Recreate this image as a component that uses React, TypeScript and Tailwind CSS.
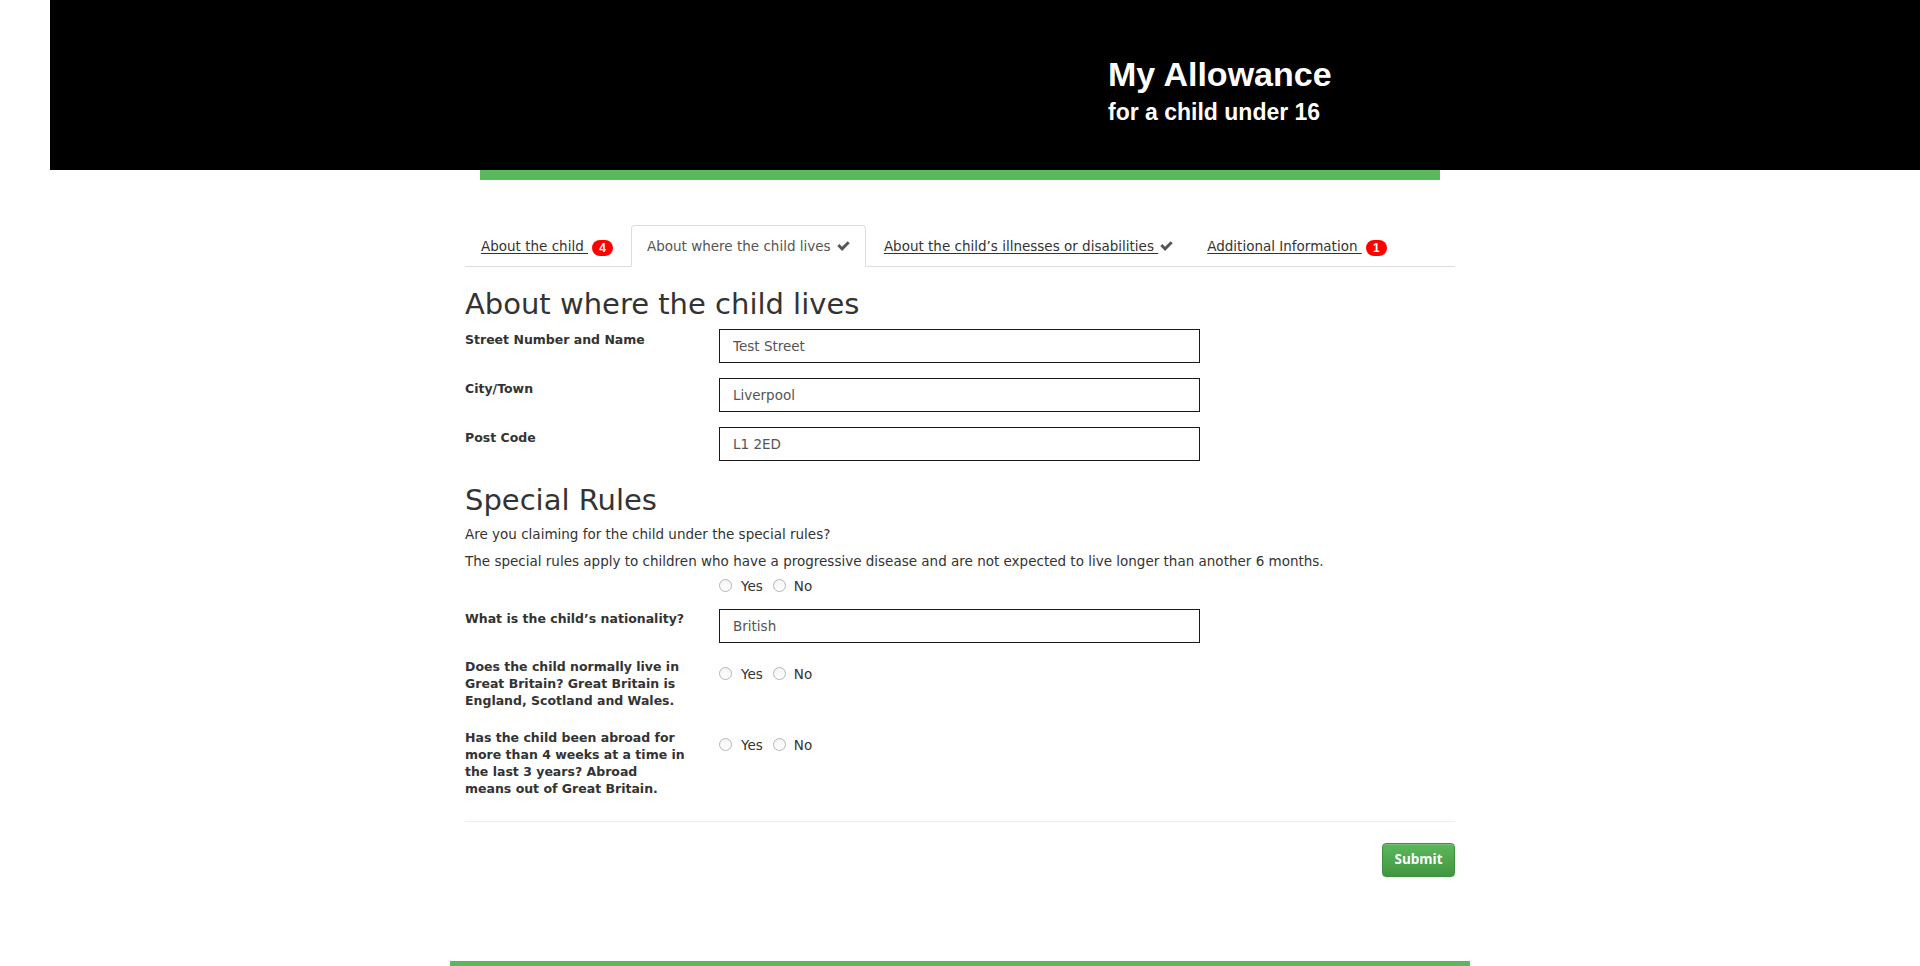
import React from "react";

function Badge({ n }: { n: string }) {
  return (
    <span className="ml-[4px] inline-flex h-[16px] min-w-[21px] items-center justify-center rounded-full bg-[#f00] px-[5px] align-[-1px] font-['Liberation_Sans',sans-serif] text-[12px] font-bold leading-none text-white no-underline">
      {n}
    </span>
  );
}

function Check() {
  return (
    <svg
      width="13"
      height="10"
      viewBox="0 0 13 10.5"
      className="ml-[2px] inline-block align-baseline"
    >
      <path d="M0 5.3 L2.1 3.2 L5 6.1 L10.9 0.2 L13 2.3 L5 10.4 Z" fill="#555" />
    </svg>
  );
}

function Radios({ className }: { className: string }) {
  return (
    <div
      className={
        "flex self-start items-center text-[13.5px] leading-[18px] text-[#333] " + className
      }
    >
      <label className="flex items-center">
        <input
          type="radio"
          className="m-0 h-[13px] w-[13px] appearance-none rounded-full border border-[#b5b5b5] bg-gradient-to-b from-[#f4f4f4] to-white"
        />
        <span className="ml-[9px]">Yes</span>
      </label>
      <label className="ml-[10px] flex items-center">
        <input
          type="radio"
          className="m-0 h-[13px] w-[13px] appearance-none rounded-full border border-[#b5b5b5] bg-gradient-to-b from-[#f4f4f4] to-white"
        />
        <span className="ml-[8px]">No</span>
      </label>
    </div>
  );
}

function TextRow({
  label,
  value,
  className,
  labelClass,
}: {
  label: string;
  value: string;
  className: string;
  labelClass: string;
}) {
  return (
    <div className={"flex items-start " + className}>
      <label
        className={
          "w-[254px] shrink-0 text-[12.5px] font-bold leading-[17px] text-[#333] " + labelClass
        }
      >
        {label}
      </label>
      <input
        readOnly
        defaultValue={value}
        className="block h-[34px] w-[481px] border border-[#1a1a1a] bg-white px-[13px] font-['DejaVu_Sans',sans-serif] text-[13.5px] text-[#555] outline-none"
      />
    </div>
  );
}

export default function App() {
  return (
    <div className="min-h-[966px] bg-white font-['DejaVu_Sans',sans-serif] text-[#333]">
      <header className="ml-[50px] h-[170px] bg-black">
        <div className="ml-[1058px] pt-[57px] font-['Liberation_Sans',Arial,sans-serif] font-bold text-white">
          <div className="text-[34px] leading-[34px]">My Allowance</div>
          <div className="mt-[10px] text-[23px] leading-[23px]">for a child under 16</div>
        </div>
      </header>
      <div className="mx-auto h-[10px] w-[960px] bg-[#5cb85c]" />

      <main className="mx-auto mt-[45px] flex w-[990px] flex-col">
        <ul className="flex h-[42px] border-b border-[#ddd] text-[13.5px] leading-[20px]">
          <li className="-mb-px mr-[2px]">
            <a
              href="#"
              className="block h-[42px] rounded-t-[4px] border border-transparent px-[15px] py-[10px] text-[#333] underline underline-offset-[2px]"
            >
              About the child <Badge n="4" />
            </a>
          </li>
          <li className="-mb-px mr-[2px]">
            <a
              href="#"
              className="block h-[42px] rounded-t-[4px] border border-[#ddd] border-b-transparent bg-white px-[15px] py-[10px] text-[#555]"
            >
              About where the child lives <Check />
            </a>
          </li>
          <li className="-mb-px mr-[2px]">
            <a
              href="#"
              className="block h-[42px] rounded-t-[4px] border border-transparent px-[15px] py-[10px] text-[#333] underline underline-offset-[2px]"
            >
              About the child’s illnesses or disabilities <Check />
            </a>
          </li>
          <li className="-mb-px mr-[2px]">
            <a
              href="#"
              className="block h-[42px] rounded-t-[4px] border border-transparent px-[15px] py-[10px] text-[#333] underline underline-offset-[2px]"
            >
              Additional Information <Badge n="1" />
            </a>
          </li>
        </ul>

        <h2 className="mt-[21px] text-[29px] font-normal leading-[32px] text-[#333]">
          About where the child lives
        </h2>
        <TextRow
          className="mt-[9px]"
          labelClass="pt-[2px]"
          label="Street Number and Name"
          value="Test Street"
        />
        <TextRow className="mt-[15px]" labelClass="pt-[2px]" label="City/Town" value="Liverpool" />
        <TextRow className="mt-[15px]" labelClass="pt-[2px]" label="Post Code" value="L1 2ED" />

        <h2 className="mt-[23px] text-[29px] font-normal leading-[32px] text-[#333]">
          Special Rules
        </h2>
        <p className="mt-[8.5px] text-[13.5px] leading-[18px]">
          Are you claiming for the child under the special rules?
        </p>
        <p className="mt-[9px] text-[13.5px] leading-[18px]">
          The special rules apply to children who have a progressive disease and are not expected to
          live longer than another 6 months.
        </p>
        <div className="-mt-px flex">
          <div className="w-[254px] shrink-0" />
          <Radios className="pt-[8px]" />
        </div>

        <TextRow
          className="mt-[14px]"
          labelClass="pt-[1px]"
          label="What is the child’s nationality?"
          value="British"
        />

        <div className="mt-[15px] flex items-start">
          <label className="w-[254px] shrink-0 text-[12.5px] font-bold leading-[17px] text-[#333]">
            Does the child normally live in
            <br />
            Great Britain? Great Britain is
            <br />
            England, Scotland and Wales.
          </label>
          <Radios className="pt-[7px]" />
        </div>

        <div className="mt-[20px] flex items-start">
          <label className="w-[254px] shrink-0 text-[12.5px] font-bold leading-[17px] text-[#333]">
            Has the child been abroad for
            <br />
            more than 4 weeks at a time in
            <br />
            the last 3 years? Abroad
            <br />
            means out of Great Britain.
          </label>
          <Radios className="pt-[7px]" />
        </div>

        <hr className="mt-[24px] border-0 border-t border-[#eee]" />

        <div className="mt-[21px] flex justify-end">
          <button
            type="button"
            className="h-[34px] w-[73px] rounded-[4px] border border-[#3e8f3e] bg-gradient-to-b from-[#5cb85c] to-[#419641] font-['Open_Sans',sans-serif] text-[13.5px] font-bold text-white shadow-[inset_0_1px_0_rgba(255,255,255,0.15),0_1px_1px_rgba(0,0,0,0.075)]"
          >
            Submit
          </button>
        </div>
      </main>

      <div className="mx-auto mt-[84px] h-[5px] w-[1020px] bg-[#5cb85c]" />
    </div>
  );
}
